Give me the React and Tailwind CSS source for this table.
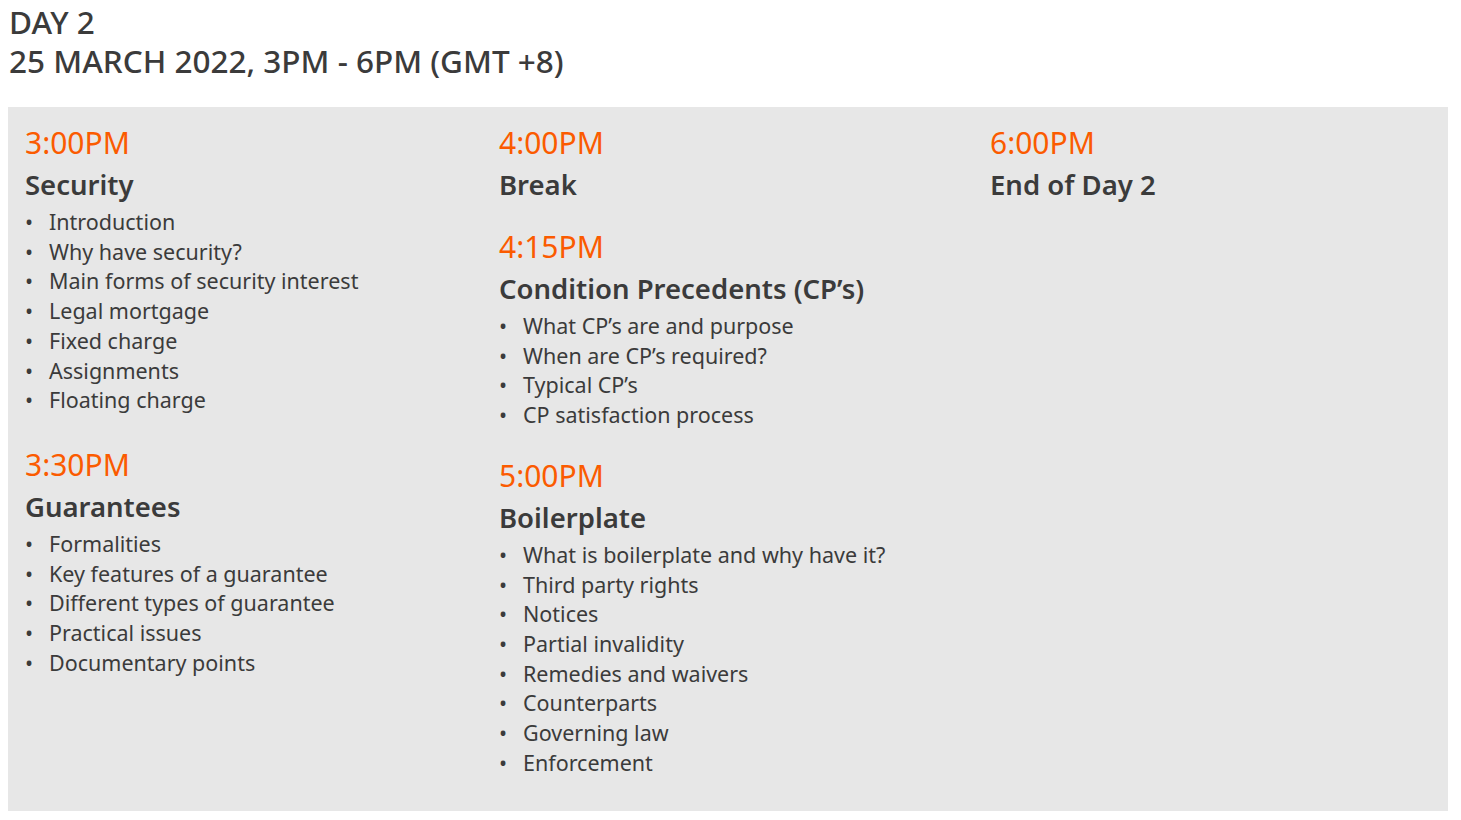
const columns = [
  [
    {
      time: '3:00PM',
      title: 'Security',
      items: [
        'Introduction',
        'Why have security?',
        'Main forms of security interest',
        'Legal mortgage',
        'Fixed charge',
        'Assignments',
        'Floating charge',
      ],
    },
    {
      time: '3:30PM',
      title: 'Guarantees',
      gap: 'mt-[28px]',
      items: [
        'Formalities',
        'Key features of a guarantee',
        'Different types of guarantee',
        'Practical issues',
        'Documentary points',
      ],
    },
  ],
  [
    { time: '4:00PM', title: 'Break', items: [] },
    {
      time: '4:15PM',
      title: 'Condition Precedents (CP\u2019s)',
      gap: 'mt-[20px]',
      items: [
        'What CP\u2019s are and purpose',
        'When are CP\u2019s required?',
        'Typical CP\u2019s',
        'CP satisfaction process',
      ],
    },
    {
      time: '5:00PM',
      title: 'Boilerplate',
      gap: 'mt-[24px]',
      items: [
        'What is boilerplate and why have it?',
        'Third party rights',
        'Notices',
        'Partial invalidity',
        'Remedies and waivers',
        'Counterparts',
        'Governing law',
        'Enforcement',
      ],
    },
  ],
  [{ time: '6:00PM', title: 'End of Day 2', items: [] }],
];

export default function App() {
  return (
    <div className="min-h-screen bg-white text-[#3b3b3b] font-['Noto_Sans',sans-serif]">
      <div className="pl-[9px] pt-[2px]">
        <h1 className="text-[31.5px] leading-[39px] font-medium">DAY 2</h1>
        <h2 className="text-[31.5px] leading-[39px] font-medium">25 MARCH 2022, 3PM - 6PM (GMT +8)</h2>
      </div>

      {/* Agenda panel */}
      <div className="mt-[27px] ml-[8px] w-[1440px] bg-[#e7e7e7] pl-[17px] pt-[14px] pb-[28px] grid grid-cols-[474px_491px_1fr]">
        {columns.map((sessions, ci) => (
          <div key={ci}>
            {sessions.map((s) => (
              <Session key={s.time} session={s} />
            ))}
          </div>
        ))}
      </div>
    </div>
  );
}

function Session({ session }) {
  return (
    <div className={session.gap || ''}>
      <div className="text-[30px] leading-[44px] text-[#fb5b00]">{session.time}</div>
      <div className="text-[27.5px] leading-[40px] font-semibold">{session.title}</div>
      {session.items.length > 0 && (
        <ul className="mt-[2px] mb-[6px]">
          {session.items.map((item) => (
            <li key={item} className="flex text-[21.5px] leading-[29.7px]">
              <span className="w-[24px] shrink-0">•</span>
              <span>{item}</span>
            </li>
          ))}
        </ul>
      )}
    </div>
  );
}
